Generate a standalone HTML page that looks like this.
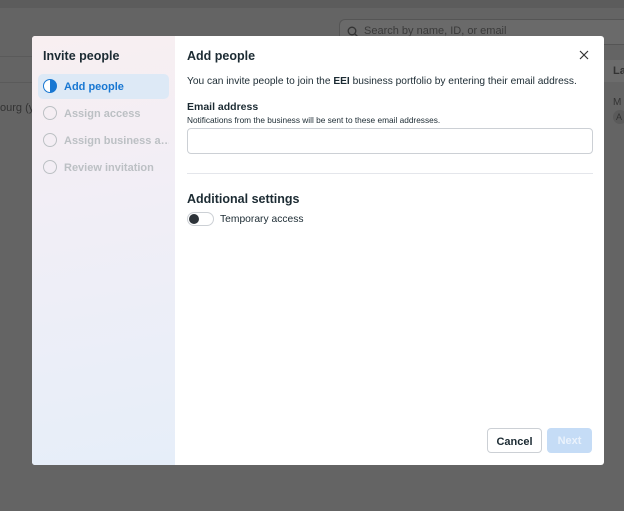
<!DOCTYPE html>
<html><head><style>
*{box-sizing:border-box;margin:0;padding:0}
body{width:624px;height:511px;overflow:hidden;background:#646464;font-family:"Liberation Sans",sans-serif;position:relative;color:#1c2b33}
.top{position:absolute;left:0;top:0;width:624px;height:8px;background:#5c5c5c}
.line{position:absolute;height:1px;background:#5a5a5a}
.search{position:absolute;left:339px;top:19px;width:300px;height:26px;border:1px solid #555;border-radius:6px;background:#6a6a6a;color:#3a3a3a;font-size:11px;padding:5px 0 0 24px}
.modal{position:absolute;left:32px;top:36px;width:572px;height:429px;background:#fff;border-radius:3px;overflow:hidden}
.side{position:absolute;left:0;top:0;width:143px;height:429px;background:linear-gradient(170deg,#f8eff1 0%,#f1eef6 40%,#e6eef9 100%)}
.side h2{position:absolute;left:11px;top:13px;font-size:12.5px;font-weight:bold;color:#1c2b33}
.step{position:absolute;left:6px;width:131px;height:25px;border-radius:5px;font-size:11px;font-weight:bold;color:#bcc0c4;padding:7px 0 0 26px;white-space:nowrap;overflow:hidden}
.step.act{background:#dde9f6;color:#1877d2}
.circ{position:absolute;left:5px;top:5px;width:14px;height:14px;border-radius:50%;border:1.5px solid #bcc0c4}
.act .circ{border-color:#1877d2;background:linear-gradient(90deg,#fff 50%,#1877d2 50%)}
.main{position:absolute;left:155px;top:0;right:0}
.t{position:absolute;left:0;white-space:nowrap}
.inp{position:absolute;left:0;top:92px;width:406px;height:26px;border:1px solid #ccd0d5;border-radius:4px}
.hr{position:absolute;left:0;top:137px;width:406px;height:1px;background:#e4e6eb}
.tog{position:absolute;left:0;top:176px;width:27px;height:14px;border-radius:7px;border:1px solid #ccd0d5}
.tog i{position:absolute;left:1px;top:1px;width:10px;height:10px;border-radius:50%;background:#2d3339}
.btn{position:absolute;top:392px;height:25px;border-radius:4px;font-size:11px;font-weight:bold;text-align:center;padding-top:7px}
</style></head><body>
<div class="top"></div>
<div class="line" style="left:0;top:56px;width:32px"></div>
<div class="line" style="left:0;top:82px;width:32px"></div>
<div class="search"><svg style="position:absolute;left:7px;top:6px" width="12" height="12" viewBox="0 0 12 12"><circle cx="5" cy="5" r="3.8" fill="none" stroke="#333" stroke-width="1.3"/><path d="M8 8l3 3" stroke="#333" stroke-width="1.3"/></svg>Search by name, ID, or email</div>
<div style="position:absolute;left:0;top:102px;font-size:11px;color:#333">ourg (y</div>
<div style="position:absolute;left:604px;top:60px;width:20px;height:22px;background:#6c6c6c"></div>
<div style="position:absolute;left:613px;top:65px;font-size:11px;font-weight:bold;color:#333">La</div>
<div style="position:absolute;left:613px;top:97px;font-size:10px;color:#333">M</div>
<div style="position:absolute;left:613px;top:110px;width:14px;height:14px;border-radius:7px;background:#5a5a5a;font-size:9px;color:#333;padding:2px 0 0 3px">A</div>
<div class="modal">
 <div class="side">
  <h2>Invite people</h2>
  <div class="step act" style="top:38px"><span class="circ"></span>Add people</div>
  <div class="step" style="top:65px"><span class="circ"></span>Assign access</div>
  <div class="step" style="top:92px"><span class="circ"></span>Assign business a…</div>
  <div class="step" style="top:119px"><span class="circ"></span>Review invitation</div>
 </div>
 <div class="main">
  <div class="t" style="top:13px;font-size:12.5px;font-weight:bold">Add people</div>
  <svg style="position:absolute;left:392px;top:14px" width="10" height="10" viewBox="0 0 10 10"><path d="M1 1l8 8M9 1l-8 8" stroke="#333" stroke-width="1.2"/></svg>
  <div class="t" style="top:40px;font-size:10.2px">You can invite people to join the <b>EEI</b> business portfolio by entering their email address.</div>
  <div class="t" style="top:65px;font-size:10.5px;font-weight:bold">Email address</div>
  <div class="t" style="top:79px;font-size:8.3px">Notifications from the business will be sent to these email addresses.</div>
  <div class="inp"></div>
  <div class="hr"></div>
  <div class="t" style="top:156px;font-size:12.5px;font-weight:bold">Additional settings</div>
  <div class="tog"><i></i></div>
  <div class="t" style="top:178px;font-size:10.3px;left:33px">Temporary access</div>
  <div class="btn" style="left:300px;width:55px;border:1px solid #ccd0d5;color:#1c2b33">Cancel</div>
  <div class="btn" style="left:360px;width:45px;background:#c5dcf6;color:#eaf2fc">Next</div>
 </div>
</div>
</body></html>
